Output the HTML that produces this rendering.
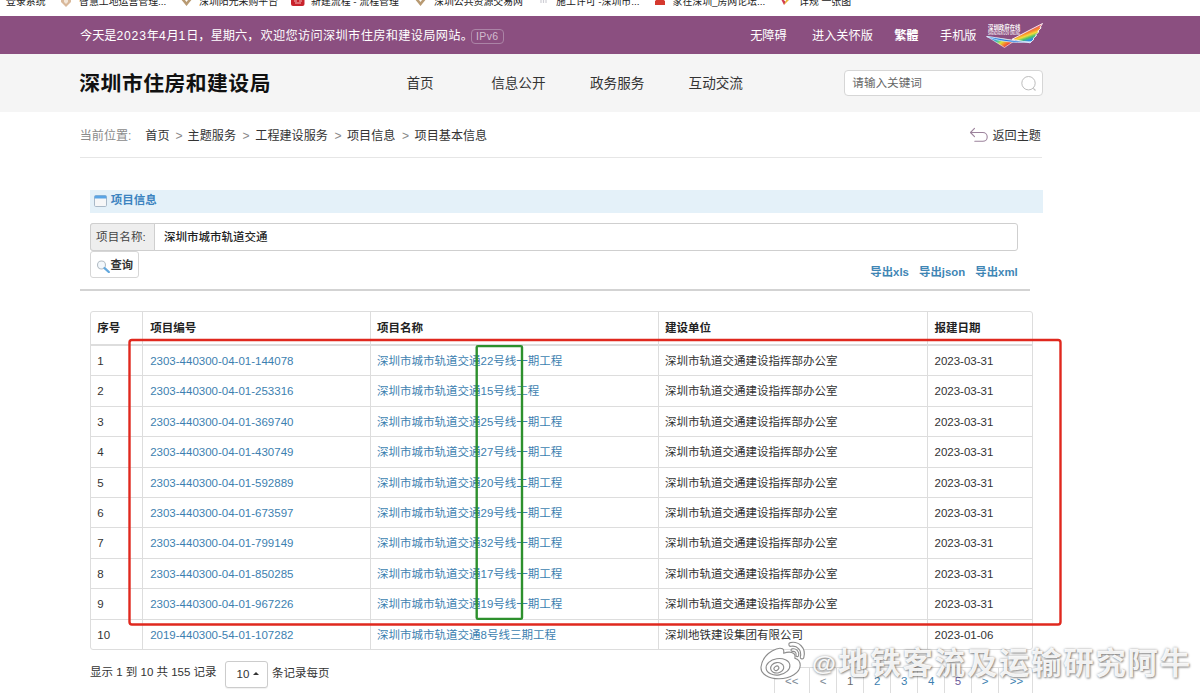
<!DOCTYPE html>
<html lang="zh-CN">
<head>
<meta charset="utf-8">
<title>深圳市住房和建设局 - 项目基本信息</title>
<style>
*{box-sizing:border-box;margin:0;padding:0}
html,body{width:1200px;height:693px;overflow:hidden;background:#fff}
body{font-family:"Liberation Sans","Noto Sans CJK SC",sans-serif;color:#333;position:relative;font-size:12px}
.abs{position:absolute;white-space:nowrap}
a{text-decoration:none;color:inherit}

/* bookmarks strip (cropped browser bar) */
#bm{left:0;top:-5.5px;width:1200px;height:24px;background:#fff;font-size:9.9px;color:#222;line-height:14px}
#bm span{position:absolute;top:0;white-space:nowrap}
#bm svg{position:absolute;top:-1.5px;display:block}

/* purple top bar */
#top{left:0;top:16px;width:1200px;height:38px;background:#8b4f80;color:#fff;font-size:12.2px;line-height:40.6px}
#top span{position:absolute;top:0;white-space:nowrap}
#top span u{text-decoration:none;letter-spacing:.75px}
#ipv6{position:absolute;left:471px;top:12.5px;width:32.5px;height:15px;border:1px solid #ab84a6;border-radius:4px;font-size:10.5px;line-height:13px;text-align:center;color:#d2bccf;letter-spacing:.4px}

/* grey header */
#hdr{left:0;top:54px;width:1200px;height:57.7px;background:#f5f5f5}
#logo{left:79.3px;top:68.6px;font-size:20.8px;font-weight:700;color:#111;line-height:30px;letter-spacing:.5px}
.nav{top:74px;font-size:13.6px;line-height:20px;color:#333}
#search{left:843.8px;top:70px;width:199px;height:26.4px;border:1px solid #d6d6d6;border-radius:4px;background:#fff}
#search span{position:absolute;left:7.5px;top:0;line-height:24.4px;font-size:11.6px;color:#666}
#search svg{position:absolute;left:175px;top:4.2px}

/* breadcrumb */
.cr{top:127px;font-size:12.1px;line-height:18px;color:#333}
.cr.g{color:#8a8a8a}
.cr.s{color:#888}
#back{left:992.5px;top:127px;font-size:12.1px;line-height:18px;color:#333}
#backico{left:969px;top:126px}
#crumbline{left:80px;top:157px;width:962px;height:1px;background:#e6e6e6}

/* panel */
#phead{left:90px;top:189.5px;width:952.5px;height:23px;background:#e4f1f9}
#pico{left:93.5px;top:194.5px}
#ptitle{left:110.7px;top:191.3px;font-size:11.5px;font-weight:700;color:#3b83c0;line-height:18px}
#group{left:90px;top:223px;width:927.5px;height:27.5px;border:1px solid #cfcfcf;border-radius:3px;background:#fff}
#addon{left:90px;top:223px;width:64.8px;height:27.5px;border:1px solid #cfcfcf;border-radius:3px 0 0 3px;background:#eee;font-size:11.5px;line-height:26.5px;text-align:left;padding-left:5px;letter-spacing:.15px;color:#444}
#ival{left:164px;top:222.8px;font-size:11.5px;line-height:28px;color:#222;font-weight:500}
#btn{left:90px;top:251.2px;width:48.7px;height:27.3px;border:1px solid #d6d6d6;border-radius:3px;background:#fff}
#btn span{position:absolute;left:19.5px;top:0;line-height:26.5px;font-size:11.3px;font-weight:700;color:#333}
#btn svg{position:absolute;left:4.5px;top:7.5px}
.exp{top:263.2px;font-size:11.4px;font-weight:700;color:#3f86b5;line-height:18px}
#hr{left:80px;top:289.2px;width:950px;height:2px;background:#d3d3d3}

/* table */
#tbl{left:90px;top:311px;width:942.5px;height:338.6px;border:1px solid #ddd;border-radius:3px;font-size:11.5px;color:#333;overflow:hidden;background:#fff}
#tbl .tr{position:absolute;left:0;width:100%;height:30.4px;line-height:30.4px;border-top:1px solid #ddd}
#tbl .tr.th{border-top:0;border-bottom:1px solid #ddd;line-height:33px;font-weight:700;color:#222}
#tbl .tr>*{position:absolute;top:0;white-space:nowrap}
#tbl a{color:#3d7fb0}
#tbl .c1{left:6.3px}#tbl .c2{left:59.2px}#tbl .c3{left:286px}#tbl .c4{left:574px}#tbl .c5{left:843.5px}
#tbl .v{position:absolute;top:0;width:1px;height:100%;background:#ddd;display:block}

/* footer */
#info{left:90px;top:663px;font-size:11.5px;line-height:18px;color:#333}
#pgbtn{left:225px;top:660.5px;width:43px;height:27px;border:1px solid #ccc;border-radius:3px;background:#fff;font-size:11.5px;line-height:25px;color:#333;box-shadow:0 1px 1px rgba(0,0,0,.06)}
#pgbtn span{position:absolute;left:10.5px;top:0}
#pgbtn i{position:absolute;left:26.5px;top:10.5px;width:0;height:0;border-left:3px solid transparent;border-right:3px solid transparent;border-bottom:3.5px solid #333;display:block}
#per{left:272px;top:663.5px;font-size:11.5px;line-height:18px;color:#333}
#pager{left:773.5px;top:666.5px;width:259.5px;height:29px;border:1px solid #ddd;border-radius:3px 3px 0 0;background:#fff;font-size:11.5px;color:#3d7fb0;overflow:hidden}
#pager span{position:absolute;top:0;line-height:27px;text-align:center;display:block;height:29px;border-left:1px solid #ddd}
#pager span:first-child{border-left:0}

/* annotations */
#red{left:128.5px;top:339px;width:933px;height:286px;border:2px solid #e0231d;border-radius:3px}
#green{left:475.5px;top:345px;width:48px;height:275px;border:2px solid #2f952f;border-radius:2px}

/* watermark */
#wm{left:812.3px;top:643.6px;font-size:30.3px;line-height:40px;color:rgba(255,255,255,.93);font-weight:700;letter-spacing:1.85px;
 text-shadow:1px 1px 2px rgba(0,0,0,.36),0 0 2.5px rgba(0,0,0,.36)}
#wm b{font-weight:700;font-size:21.5px;letter-spacing:0;display:inline-block;width:26px;vertical-align:3px;transform:scaleX(1.14);transform-origin:0 50%}
#wb{left:757px;top:638px}
</style>
</head>
<body>

<!-- browser bookmarks (cropped) -->
<div id="bm" class="abs">
  <span style="left:6px">登录系统</span>
  <svg style="left:59.5px" width="12" height="14" viewBox="0 0 12 14"><path d="M1 1h10v8l-5 5-5-5z" fill="#d9b99b"/><path d="M4 4h4v5l-2 2-2-2z" fill="#f3e6d8"/></svg>
  <span style="left:79px">智慧工地运营管理...</span>
  <svg style="left:179.5px" width="13" height="14" viewBox="0 0 13 14"><path d="M0 5l6.5 8L13 5l-2-2-4.5 6L2 3z" fill="#b89a72"/><path d="M4 3l2.5 3L9 3 6.500 0z" fill="#cdb48f"/></svg>
  <span style="left:199px">深圳阳光采购平台</span>
  <svg style="left:291px" width="13.500" height="14" viewBox="0 0 13.5 14"><rect width="13.500" height="13" rx="2" fill="#c8232c"/><path d="M3 8h3M8 8h3M4 10h6" stroke="#f4b8b8" stroke-width="1.200"/></svg>
  <span style="left:311px">新建流程 - 流程管理</span>
  <svg style="left:414px" width="13" height="14" viewBox="0 0 13 14"><path d="M0 5l6.5 8L13 5l-2-2-4.5 6L2 3z" fill="#b89a72"/><path d="M4 3l2.5 3L9 3 6.500 0z" fill="#cdb48f"/></svg>
  <span style="left:434px">深圳公共资源交易网</span>
  <svg style="left:540px" width="7" height="14" viewBox="0 0 7 14"><path d="M1 5v5M3.500 5v5M6 5v5" stroke="#cfcfd6" stroke-width="1.200"/></svg>
  <span style="left:556px">施工许可 -深圳市...</span>
  <svg style="left:655px" width="10" height="14" viewBox="0 0 10 14"><path d="M0 8l5-4 5 4v4H0z" fill="#d5382e"/></svg>
  <span style="left:672.500px">家在深圳_房网论坛...</span>
  <svg style="left:780px" width="10" height="14" viewBox="0 0 10 14"><path d="M0 4l4 8 2-3z" fill="#d23c50"/><path d="M4 12l6-6-3-1z" fill="#e8b83a"/><path d="M6 5l4 1-1-4z" fill="#4a6cc8"/></svg>
  <span style="left:799px">详规 一张图</span>
</div>

<!-- purple bar -->
<div id="top" class="abs">
  <span style="left:80px">今天是<u>2023</u>年<u>4</u>月<u>1</u>日，</span>
  <span style="left:210.700px">星期六，</span>
  <span style="left:260.500px;letter-spacing:.33px">欢迎您访问深圳市住房和建设局网站。</span>
  <div id="ipv6">IPv6</div>
  <span style="left:750.200px">无障碍</span>
  <span style="left:812px">进入关怀版</span>
  <span style="left:894.200px;font-weight:700">繁體</span>
  <span style="left:940px">手机版</span>
  <svg style="position:absolute;left:985px;top:4.500px" width="60" height="28" viewBox="985 20.500 60 28">
    <defs>
      <linearGradient id="gw1" x1="1029" y1="29" x2="1032.500" y2="38.500" gradientUnits="userSpaceOnUse">
        <stop offset="0" stop-color="#f0566a"/><stop offset=".25" stop-color="#f7892c"/><stop offset=".5" stop-color="#f6dc3a"/><stop offset=".75" stop-color="#4cc46a"/><stop offset="1" stop-color="#2f8fe0"/>
      </linearGradient>
      <linearGradient id="gw2" x1="996" y1="37" x2="1004" y2="47" gradientUnits="userSpaceOnUse">
        <stop offset="0" stop-color="#2f8fe0"/><stop offset=".3" stop-color="#46c9a8"/><stop offset=".55" stop-color="#d9e23a"/><stop offset=".8" stop-color="#f7892c"/><stop offset="1" stop-color="#ee4a3a"/>
      </linearGradient>
    </defs>
    <path d="M1012 38.800 L1042.500 23 L1040 27 L1041.200 27.300 L1037.800 30.800 L1039 31.200 L1035.500 34.600 L1036.600 35 L1033 38.200 L1034 38.700 L1030 42.300 Z" fill="url(#gw1)" stroke="#fff" stroke-opacity=".85" stroke-width="1"/>
    <path d="M987 36 L1015 40 L1004.500 47 Z" fill="url(#gw2)" stroke="#fff" stroke-opacity=".7" stroke-width=".8"/>
    <path d="M986.500 36 C998 37 1010 40.500 1031 41.500 C1012 43 998 40.500 986.500 36 Z" fill="#2d7fe0" stroke="#e8f2ff" stroke-width=".7"/>
    <text x="988" y="29.500" font-family="'Liberation Sans','Noto Sans CJK SC',sans-serif" font-size="7.400" font-weight="700" fill="#fff" fill-opacity=".95" textLength="32.500" lengthAdjust="spacingAndGlyphs">深圳政府在线</text>
    <text x="988" y="34.400" font-family="'Liberation Sans',sans-serif" font-size="4.800" font-weight="700" fill="#fff" fill-opacity=".85" textLength="32" lengthAdjust="spacingAndGlyphs">SHENZHEN GOV ONLINE</text>
  </svg>
</div>

<!-- header -->
<div id="hdr" class="abs"></div>
<div id="logo" class="abs">深圳市住房和建设局</div>
<div class="abs nav" style="left:406.500px">首页</div>
<div class="abs nav" style="left:491.200px">信息公开</div>
<div class="abs nav" style="left:590px">政务服务</div>
<div class="abs nav" style="left:688.600px">互动交流</div>
<div id="search" class="abs"><span>请输入关键词</span>
  <svg width="18" height="18" viewBox="0 0 18 18"><circle cx="8.500" cy="8.200" r="6.700" fill="none" stroke="#bdbdbd" stroke-width="1"/><path d="M13.300 13.300l2.200 2.200" stroke="#bdbdbd" stroke-width="1.100"/></svg>
</div>

<!-- breadcrumb -->
<div class="abs cr g" style="left:79.700px">当前位置:</div>
<div class="abs cr" style="left:145.300px">首页</div>
<div class="abs cr s" style="left:175.500px">&gt;</div>
<div class="abs cr" style="left:187.600px">主题服务</div>
<div class="abs cr s" style="left:242.500px">&gt;</div>
<div class="abs cr" style="left:255.300px">工程建设服务</div>
<div class="abs cr s" style="left:334.500px">&gt;</div>
<div class="abs cr" style="left:347px">项目信息</div>
<div class="abs cr s" style="left:402px">&gt;</div>
<div class="abs cr" style="left:414.600px">项目基本信息</div>
<svg id="backico" class="abs" width="20" height="18" viewBox="0 0 20 18"><path d="M5.500 2.300 L1.500 6.500 L5.500 10.700 M1.500 6.500 H13.800 A4.400 4.400 0 0 1 13.800 15.300 H5.800" fill="none" stroke="#9c839c" stroke-width="1.100" stroke-linecap="round" stroke-linejoin="round"/></svg>
<div id="back" class="abs">返回主题</div>
<div id="crumbline" class="abs"></div>

<!-- panel -->
<div id="phead" class="abs"></div>
<svg id="pico" class="abs" width="13" height="12" viewBox="0 0 13 12"><rect x=".5" y=".5" width="12" height="11" rx="1.200" fill="#f6f7f8" stroke="#a9b9c8" stroke-width="1"/><path d="M.5 3.500V1.700Q.5.500 1.700.500H11.300Q12.500.500 12.500 1.700V3.500Z" fill="#5aa5e6"/></svg>
<div id="ptitle" class="abs">项目信息</div>
<div id="group" class="abs"></div>
<div id="addon" class="abs">项目名称:</div>
<div id="ival" class="abs">深圳市城市轨道交通</div>
<div id="btn" class="abs"><svg width="16" height="13" viewBox="0 0 16 13"><circle cx="5.500" cy="5" r="4" fill="#f3f8fc" stroke="#b3bcc4" stroke-width="1.100"/><path d="M8.600 8.100l4.200 3.900" stroke="#62a8de" stroke-width="2.300" stroke-linecap="round"/></svg><span>查询</span></div>
<div class="abs exp" style="left:870.300px">导出xls</div>
<div class="abs exp" style="left:919px">导出json</div>
<div class="abs exp" style="left:975.300px">导出xml</div>
<div id="hr" class="abs"></div>

<!-- table -->
<div id="tbl" class="abs">
  <div class="tr th" style="top:0;height:33px"><span class="c1">序号</span><span class="c2">项目编号</span><span class="c3">项目名称</span><span class="c4">建设单位</span><span class="c5">报建日期</span></div>
  <div class="tr" style="top:33.0px"><span class="c1">1</span><a class="c2">2303-440300-04-01-144078</a><a class="c3">深圳市城市轨道交通22号线一期工程</a><span class="c4">深圳市轨道交通建设指挥部办公室</span><span class="c5">2023-03-31</span></div>
  <div class="tr" style="top:63.4px"><span class="c1">2</span><a class="c2">2303-440300-04-01-253316</a><a class="c3">深圳市城市轨道交通15号线工程</a><span class="c4">深圳市轨道交通建设指挥部办公室</span><span class="c5">2023-03-31</span></div>
  <div class="tr" style="top:93.8px"><span class="c1">3</span><a class="c2">2303-440300-04-01-369740</a><a class="c3">深圳市城市轨道交通25号线一期工程</a><span class="c4">深圳市轨道交通建设指挥部办公室</span><span class="c5">2023-03-31</span></div>
  <div class="tr" style="top:124.2px"><span class="c1">4</span><a class="c2">2303-440300-04-01-430749</a><a class="c3">深圳市城市轨道交通27号线一期工程</a><span class="c4">深圳市轨道交通建设指挥部办公室</span><span class="c5">2023-03-31</span></div>
  <div class="tr" style="top:154.6px"><span class="c1">5</span><a class="c2">2303-440300-04-01-592889</a><a class="c3">深圳市城市轨道交通20号线二期工程</a><span class="c4">深圳市轨道交通建设指挥部办公室</span><span class="c5">2023-03-31</span></div>
  <div class="tr" style="top:185.0px"><span class="c1">6</span><a class="c2">2303-440300-04-01-673597</a><a class="c3">深圳市城市轨道交通29号线一期工程</a><span class="c4">深圳市轨道交通建设指挥部办公室</span><span class="c5">2023-03-31</span></div>
  <div class="tr" style="top:215.4px"><span class="c1">7</span><a class="c2">2303-440300-04-01-799149</a><a class="c3">深圳市城市轨道交通32号线一期工程</a><span class="c4">深圳市轨道交通建设指挥部办公室</span><span class="c5">2023-03-31</span></div>
  <div class="tr" style="top:245.8px"><span class="c1">8</span><a class="c2">2303-440300-04-01-850285</a><a class="c3">深圳市城市轨道交通17号线一期工程</a><span class="c4">深圳市轨道交通建设指挥部办公室</span><span class="c5">2023-03-31</span></div>
  <div class="tr" style="top:276.2px"><span class="c1">9</span><a class="c2">2303-440300-04-01-967226</a><a class="c3">深圳市城市轨道交通19号线一期工程</a><span class="c4">深圳市轨道交通建设指挥部办公室</span><span class="c5">2023-03-31</span></div>
  <div class="tr" style="top:306.6px"><span class="c1">10</span><a class="c2">2019-440300-54-01-107282</a><a class="c3">深圳市城市轨道交通8号线三期工程</a><span class="c4">深圳地铁建设集团有限公司</span><span class="c5">2023-01-06</span></div>
  <i class="v" style="left:51px"></i><i class="v" style="left:278.5px"></i><i class="v" style="left:566.5px"></i><i class="v" style="left:836px"></i>
</div>

<!-- footer -->
<div id="info" class="abs">显示 1 到 10 共 155 记录</div>
<div id="pgbtn" class="abs"><span>10</span><i></i></div>
<div id="per" class="abs">条记录每页</div>
<div id="pager" class="abs">
  <span style="left:0;width:34.5px;color:#7b8794">&lt;&lt;</span><span style="left:34.5px;width:27.3px;color:#7b8794">&lt;</span><span style="left:61.8px;width:27px;color:#6b6b6b">1</span><span style="left:88.8px;width:27px">2</span><span style="left:115.8px;width:26.8px">3</span><span style="left:142.6px;width:27px">4</span><span style="left:169.6px;width:26.8px;color:#6a5c9c">5</span><span style="left:196.4px;width:27.5px">&gt;</span><span style="left:223.9px;width:35px">&gt;&gt;</span>
</div>

<!-- annotations -->
<svg id="anno" class="abs" style="left:0;top:0" width="1200" height="693" viewBox="0 0 1200 693">
  <rect x="129.500" y="340" width="931" height="284.500" rx="2.500" fill="none" stroke="#e0281e" stroke-width="2.400"/>
  <rect x="476.700" y="346.100" width="45.300" height="272.800" rx="1.200" fill="none" stroke="#2d902d" stroke-width="2.400"/>
</svg>

<!-- watermark -->
<svg id="wb" class="abs" width="52" height="46" viewBox="757 638 52 46">
  <g fill="rgba(255,255,255,.93)" stroke="rgba(120,120,120,.85)" stroke-width="1.1" stroke-linejoin="round">
    <path d="M761 667 C761.800 661 766 654.500 772 651 C775.500 649 779.500 647.500 782.500 648.800 C784 649.600 784 651.500 783.600 653.200 C787 652 791.500 651.800 793.800 653.500 C795.300 654.800 795.200 656.800 794.800 658.200 C797.500 659 800.300 661.500 800.200 665.500 C800 672.500 790.500 678.800 779 678.800 C768.500 678.800 760.500 674 761 667 Z"/>
    <ellipse cx="778" cy="666.800" rx="12" ry="8.200" transform="rotate(-9 778 666.8)"/>
    <ellipse cx="777.200" cy="667.800" rx="6.600" ry="5.200" transform="rotate(-9 777.2 667.8)"/>
    <ellipse cx="776.400" cy="668.300" rx="2.600" ry="2" transform="rotate(-35 776.4 668.3)"/>
    <path d="M790.200 642.600 C798.500 640.800 806.500 647.800 803.800 657.600 C803.200 659.800 799.800 659 800.300 656.800 C802 650.500 797.500 645.200 791 646.300 C788.600 646.700 788 643.100 790.200 642.600 Z"/>
    <path d="M792 648.900 C796.200 648 799.600 651.400 798.600 655.600 C798.200 657.300 795.700 656.800 796 655.100 C796.500 652.700 794.800 651 792.500 651.400 C790.900 651.700 790.500 649.200 792 648.900 Z"/>
  </g>
</svg>
<div id="wm" class="abs"><b>@</b>地铁客流及运输研究阿牛</div>

</body>
</html>
